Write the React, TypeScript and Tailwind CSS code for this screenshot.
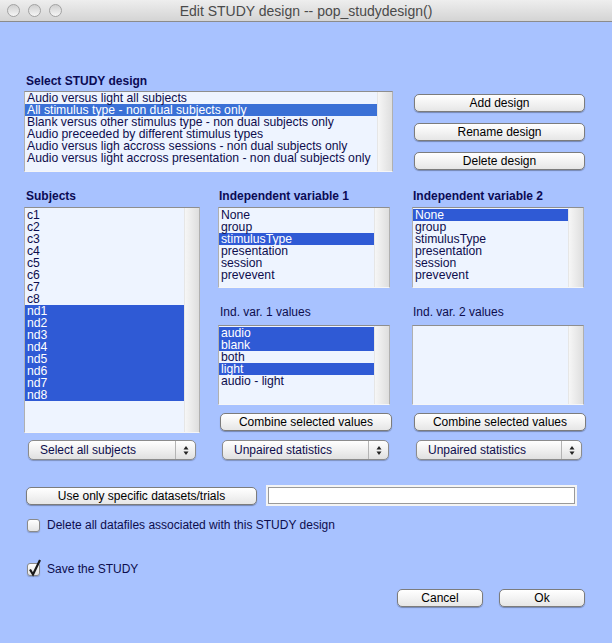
import React from "react";

const font = "font-['Liberation_Sans',Arial,sans-serif]";

type ListBoxProps = {
  items: string[];
  selected?: number[];
  className?: string;
  selColor?: string;
  pad?: string;
};

function ListBox({ items, selected = [], className = "", selColor = "bg-[#2f5ad5]", pad = "pt-[1px]" }: ListBoxProps) {
  return (
    <div
      className={`flex border border-t-[#8e8e8e] border-x-[#b0b0b0] border-b-[#f6f6f6] bg-[#eef4ff] ${className}`}
    >
      <div className={`flex-1 overflow-hidden ${pad}`}>
        {items.map((it, i) => (
          <div
            key={it}
            className={`h-[12px] pl-[2px] text-[12.2px] leading-[12px] whitespace-nowrap ${
              selected.includes(i) ? `${selColor} text-white` : "text-[#0d0d4d]"
            }`}
          >
            {it}
          </div>
        ))}
      </div>
      <div className="w-[15px] border-l border-[#e6e6e6] bg-gradient-to-r from-[#f6f6f6] to-[#dedede]" />
    </div>
  );
}

function Button({ children, className = "" }: { children: React.ReactNode; className?: string }) {
  return (
    <div
      className={`flex h-[18px] items-center justify-center rounded-[5px] border border-[#7c7c7c] bg-gradient-to-b from-[#ffffff] via-[#f3f3f3] to-[#e6e6e6] text-[12px] leading-[16px] text-black shadow-[0_1px_1px_rgba(0,0,0,0.3)] ${className}`}
    >
      {children}
    </div>
  );
}

function Popup({ label, className = "" }: { label: string; className?: string }) {
  return (
    <div
      className={`flex h-[20px] rounded-[5px] border border-[#8c8c8c] bg-gradient-to-b from-[#ffffff] via-[#f0f0f0] to-[#e0e0e0] shadow-[0_1px_1px_rgba(0,0,0,0.25)] ${className}`}
    >
      <div className="flex-1 pl-[11px] text-[12px] leading-[18px] text-[#0d0d4d]">{label}</div>
      <div className="flex w-[20px] items-center justify-center border-l border-[#b4b4b4]">
        <svg width="6" height="11" viewBox="0 0 6 11">
          <path d="M3 1 L5.5 4.5 L0.5 4.5 Z" fill="#222" />
          <path d="M0.5 6.5 L5.5 6.5 L3 10 Z" fill="#222" />
        </svg>
      </div>
    </div>
  );
}

function CheckBox({ checked = false }: { checked?: boolean }) {
  return (
    <div className="relative h-[13px] w-[13px] rounded-[3px] border border-[#8a8a8a] bg-gradient-to-b from-[#ffffff] to-[#e4e4e4] shadow-[0_1px_1px_rgba(0,0,0,0.2)]">
      {checked && (
        <svg className="absolute left-[0px] top-[-5px]" width="14" height="18" viewBox="0 0 14 18">
          <path d="M2 10.5 L5 15.5 L12 1" fill="none" stroke="#1a1a1a" strokeWidth="2.2" />
        </svg>
      )}
    </div>
  );
}

const ivItems = ["None", "group", "stimulusType", "presentation", "session", "prevevent"];

export default function App() {
  return (
    <div className={`flex h-[643px] w-[612px] flex-col overflow-hidden bg-[#a8c2ff] ${font}`}>
      {/* title bar */}
      <div className="relative flex h-[22px] items-center justify-center border-b border-[#8b8b8b] bg-gradient-to-b from-[#eeeeee] to-[#d4d4d4]">
        <div className="absolute left-[7px] top-[4px] flex gap-[8px]">
          {[0, 1, 2].map((i) => (
            <div
              key={i}
              className="h-[13px] w-[13px] rounded-full border border-[#a2a2a2] bg-gradient-to-b from-[#cfcfcf] to-[#f6f6f6]"
            />
          ))}
        </div>
        <span className="text-[14px] leading-[16px] text-[#4a4a4a]">Edit STUDY design -- pop_studydesign()</span>
      </div>

      <div className="flex flex-col pl-[24px]">
        {/* study design */}
        <div className="mt-[52px] flex">
          <div className="flex flex-col">
            <div className="h-[14px] pl-[2px] text-[12px] font-bold leading-[14px] text-[#0b0b55]">Select STUDY design</div>
            <ListBox
              className="mt-[3px] h-[81px] w-[369px]"
              pad="pt-0"
              selColor="bg-[#3a70d6]"
              selected={[1]}
              items={[
                "Audio versus light all subjects",
                "All stimulus type - non dual subjects only",
                "Blank versus other stimulus type - non dual subjects only",
                "Audio preceeded by different stimulus types",
                "Audio versus ligh accross sessions - non dual subjects only",
                "Audio versus light accross presentation - non dual subjects only",
              ]}
            />
          </div>
          <div className="ml-[21px] mt-[20px] flex w-[171px] flex-col gap-[11px]">
            <Button>Add design</Button>
            <Button>Rename design</Button>
            <Button>Delete design</Button>
          </div>
        </div>

        {/* variables */}
        <div className="mt-[17px] flex">
          <div className="flex w-[176px] flex-col">
            <div className="h-[14px] pl-[2px] text-[12px] font-bold leading-[14px] text-[#0b0b55]">Subjects</div>
            <ListBox
              className="mt-[4px] h-[226px] w-[176px]"
              selected={[8, 9, 10, 11, 12, 13, 14, 15]}
              items={["c1", "c2", "c3", "c4", "c5", "c6", "c7", "c8", "nd1", "nd2", "nd3", "nd4", "nd5", "nd6", "nd7", "nd8"]}
            />
            <Popup label="Select all subjects" className="ml-[4px] mt-[7px] w-[168px]" />
          </div>

          <div className="ml-[18px] flex w-[172px] flex-col">
            <div className="h-[14px] pl-[1px] text-[12px] font-bold leading-[14px] text-[#0b0b55]">Independent variable 1</div>
            <ListBox className="mt-[4px] h-[81px] w-[172px]" selected={[2]} items={ivItems} />
            <div className="mt-[17px] h-[14px] pl-[2px] text-[12px] leading-[14px] text-[#0d0d4d]">Ind. var. 1 values</div>
            <ListBox
              className="mt-[6px] h-[80px] w-[172px]"
              selected={[0, 1, 3]}
              items={["audio", "blank", "both", "light", "audio - light"]}
            />
            <Button className="ml-[2px] mt-[8px] w-[172px]">Combine selected values</Button>
            <Popup label="Unpaired statistics" className="ml-[4px] mt-[9px] w-[167px]" />
          </div>

          <div className="ml-[22px] flex w-[172px] flex-col">
            <div className="h-[14px] pl-[1px] text-[12px] font-bold leading-[14px] text-[#0b0b55]">Independent variable 2</div>
            <ListBox className="mt-[4px] h-[81px] w-[172px]" selected={[0]} items={ivItems} />
            <div className="mt-[17px] h-[14px] pl-[1px] text-[12px] leading-[14px] text-[#0d0d4d]">Ind. var. 2 values</div>
            <ListBox className="mt-[6px] h-[80px] w-[172px]" items={[]} />
            <Button className="ml-[2px] mt-[8px] w-[172px]">Combine selected values</Button>
            <Popup label="Unpaired statistics" className="ml-[4px] mt-[9px] w-[166px]" />
          </div>
        </div>

        {/* datasets */}
        <div className="mt-[25px] flex items-center">
          <Button className="ml-[2px] w-[231px]">Use only specific datasets/trials</Button>
          <div className="ml-[9px] h-[21px] w-[311px] border-[2px] border-[#f4f4f4] bg-white">
            <div className="h-full w-full border border-[#9a9a9a]" />
          </div>
        </div>

        <div className="mt-[12px] flex items-center">
          <div className="ml-[3px]">
            <CheckBox />
          </div>
          <span className="ml-[7px] text-[12px] leading-[14px] text-[#0d0d4d]">
            Delete all datafiles associated with this STUDY design
          </span>
        </div>

        <div className="mt-[30px] flex items-center">
          <div className="ml-[3px]">
            <CheckBox checked />
          </div>
          <span className="ml-[7px] text-[12px] leading-[14px] text-[#0d0d4d]">Save the STUDY</span>
        </div>

        <div className="mt-[13px] flex justify-end gap-[16px] pr-[27px]">
          <Button className="w-[86px]">Cancel</Button>
          <Button className="w-[86px]">Ok</Button>
        </div>
      </div>
    </div>
  );
}
